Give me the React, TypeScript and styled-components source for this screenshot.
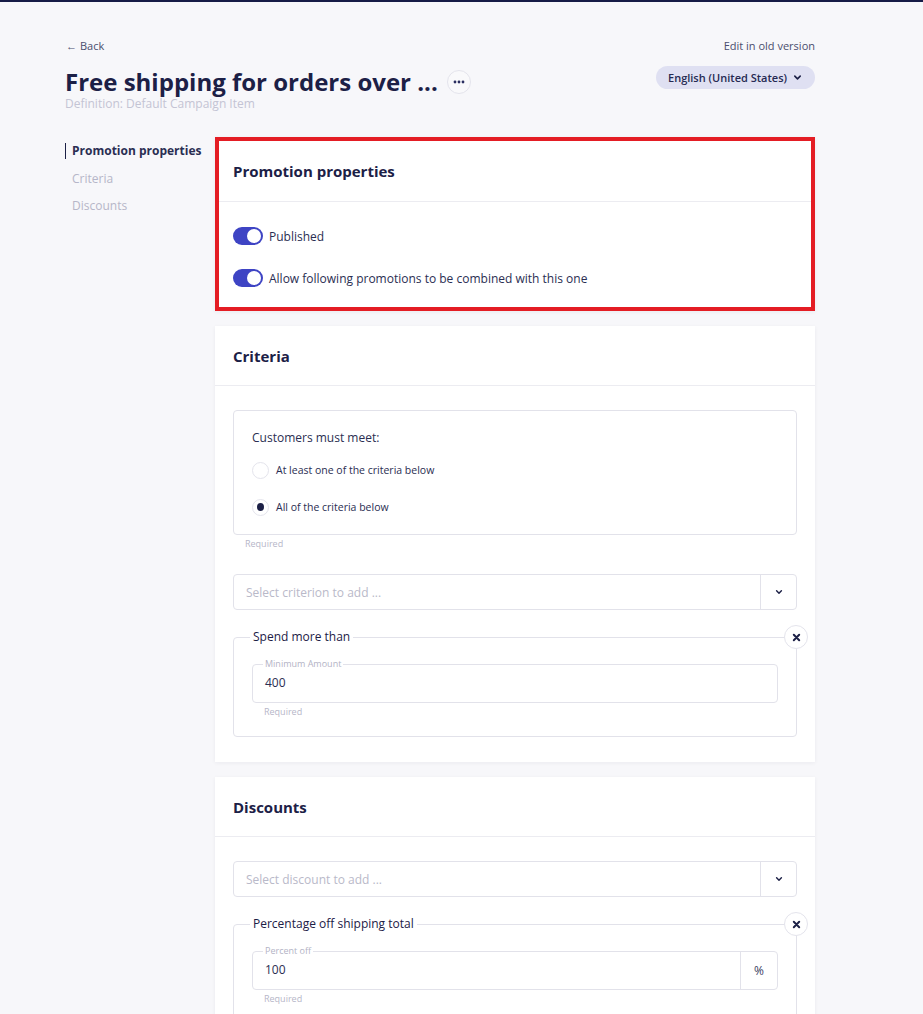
import React from 'react';
import styled, { createGlobalStyle } from 'styled-components';

const NAVY = '#1c2046';
const BORDER = '#e2e2ea';
const MUTED = '#b6b6c8';

const GlobalStyle = createGlobalStyle`
  html, body {
    margin: 0;
    padding: 0;
    background: #f7f7fa;
    font-family: 'Open Sans', 'Liberation Sans', sans-serif;
    color: ${NAVY};
  }
  * { box-sizing: border-box; }
`;

const TopLine = styled.div`
  height: 2px;
  background: #161b47;
`;

const Page = styled.div`
  width: 750px;
  margin-left: 65px;
  padding-top: 34px;
`;

const TopRow = styled.div`
  display: flex;
  justify-content: space-between;
  align-items: center;
  height: 18px;
  font-size: 11px;
  color: #4a4e6e;
`;

const BackLink = styled.a`
  display: flex;
  align-items: center;
  gap: 3px;
  color: #4a4e6e;
  text-decoration: none;
  margin-left: 1px;
`;

const TitleRow = styled.div`
  display: flex;
  justify-content: space-between;
  align-items: flex-start;
  margin-top: 14px;
`;

const TitleGroup = styled.div`
  display: flex;
  align-items: center;
  gap: 9px;
  height: 28px;
`;

const Title = styled.h1`
  margin: 0;
  font-size: 24px;
  line-height: 28px;
  font-weight: 700;
  color: ${NAVY};
`;

const DotsButton = styled.button`
  width: 24px;
  height: 24px;
  border-radius: 50%;
  border: 1px solid #e4e4ec;
  background: #f9f9fb;
  display: flex;
  align-items: center;
  justify-content: center;
  padding: 0;
`;

const LanguagePill = styled.button`
  display: flex;
  align-items: center;
  gap: 6px;
  height: 23px;
  margin-top: -2px;
  padding: 0 13px 0 12px;
  border: none;
  border-radius: 12px;
  background: #dfe0f2;
  font-family: inherit;
  font-size: 11px;
  font-weight: 600;
  color: #262a52;
`;

const Subtitle = styled.div`
  font-size: 12px;
  line-height: 16px;
  color: #c4c4d4;
`;

const Content = styled.div`
  display: flex;
  margin-top: 25px;
`;

const Nav = styled.nav`
  width: 150px;
  flex-shrink: 0;
  display: flex;
  flex-direction: column;
  gap: 11.5px;
  padding-top: 6px;
`;

const NavItem = styled.a<{ $active?: boolean }>`
  display: block;
  font-size: 12px;
  line-height: 16px;
  padding-left: 6px;
  border-left: 1px solid ${p => (p.$active ? NAVY : 'transparent')};
  font-weight: ${p => (p.$active ? 700 : 400)};
  color: ${p => (p.$active ? '#2a2e52' : MUTED)};
`;

const Cards = styled.div`
  width: 600px;
  display: flex;
  flex-direction: column;
  gap: 15px;
`;

const Card = styled.section<{ $highlight?: boolean }>`
  background: #fff;
  box-shadow: 0 1px 4px rgba(30, 32, 70, 0.06);
  outline: ${p => (p.$highlight ? '4px solid #e41d24' : 'none')};
  outline-offset: -4px;
`;

const CardHeader = styled.header<{ $tall?: boolean }>`
  height: ${p => (p.$tall ? '65px' : '60px')};
  padding: ${p => (p.$tall ? '4px 18px 0' : '0 18px')};
  display: flex;
  align-items: center;
  border-bottom: 1px solid #ececf1;
  font-size: 15px;
  font-weight: 700;
  color: ${NAVY};
`;

const CardBody = styled.div<{ $compact?: boolean }>`
  padding: ${p => (p.$compact ? '24px 18px 23px' : '24px 18px 25px')};
  display: flex;
  flex-direction: column;
  gap: ${p => (p.$compact ? '22px' : '0')};
`;

const ToggleRow = styled.label`
  display: flex;
  align-items: center;
  gap: 6px;
  height: 20px;
  font-size: 12px;
  color: #2a2e52;
`;

const Toggle = styled.span<{ $on: boolean }>`
  position: relative;
  width: 30px;
  height: 18px;
  border-radius: 9px;
  background: ${p => (p.$on ? '#3e44c4' : '#d4d4de')};
  &::after {
    content: '';
    position: absolute;
    top: 2px;
    left: ${p => (p.$on ? '14px' : '2px')};
    width: 14px;
    height: 14px;
    border-radius: 50%;
    background: #fff;
  }
`;

const OptionBox = styled.div`
  border: 1px solid ${BORDER};
  border-radius: 4px;
  padding: 18px 18px 17px;
`;

const OptionTitle = styled.div`
  font-size: 12px;
  line-height: 18px;
  color: #2a2e52;
  margin-bottom: 13px;
`;

const RadioList = styled.div`
  display: flex;
  flex-direction: column;
  gap: 17px;
`;

const RadioRow = styled.label`
  display: flex;
  align-items: center;
  gap: 7px;
  height: 20px;
  font-size: 10.5px;
  color: #2a2e52;
`;

const RadioCircle = styled.span<{ $checked: boolean }>`
  width: 17px;
  height: 17px;
  border-radius: 50%;
  border: 1px solid #e4e4ec;
  background: #fff;
  display: flex;
  align-items: center;
  justify-content: center;
  &::after {
    content: '';
    display: ${p => (p.$checked ? 'block' : 'none')};
    width: 7px;
    height: 8px;
    border-radius: 50%;
    background: #1c2046;
  }
`;

const Hint = styled.div<{ $indent?: number }>`
  font-size: 9px;
  line-height: 12px;
  color: ${MUTED};
  margin-top: 3px;
  padding-left: ${p => p.$indent ?? 12}px;
`;

const Select = styled.div<{ $top: number }>`
  display: flex;
  height: 36px;
  border: 1px solid ${BORDER};
  border-radius: 4px;
  margin-top: ${p => p.$top}px;
`;

const SelectText = styled.div`
  flex: 1;
  display: flex;
  align-items: center;
  padding-left: 12px;
  font-size: 12px;
  color: #b9b9c9;
`;

const SelectToggle = styled.div`
  width: 36px;
  border-left: 1px solid ${BORDER};
  display: flex;
  align-items: center;
  justify-content: center;
`;

const Group = styled.fieldset`
  position: relative;
  margin: 19px 0 0;
  padding: 13px 18px 18px;
  border: 1px solid ${BORDER};
  border-radius: 4px;
  min-width: 0;
`;

const GroupLegend = styled.legend`
  margin-left: -2px;
  padding: 0 3px;
  font-size: 12px;
  line-height: 16px;
  font-weight: 500;
  color: ${NAVY};
`;

const RemoveButton = styled.button`
  position: absolute;
  top: -20px;
  right: -12px;
  width: 24px;
  height: 24px;
  border-radius: 50%;
  border: 1px solid #e4e4ec;
  background: #fff;
  padding: 0;
  display: flex;
  align-items: center;
  justify-content: center;
`;

const Field = styled.fieldset`
  margin: 0;
  padding: 0;
  border: 1px solid ${BORDER};
  border-radius: 4px;
  display: flex;
  min-width: 0;
`;

const FieldLegend = styled.legend`
  margin-left: 10px;
  padding: 0 2px;
  font-size: 9px;
  line-height: 12px;
  color: #b3b3c5;
`;

const FieldValue = styled.div`
  flex: 1;
  padding: 4px 12px 10px;
  font-size: 12px;
  line-height: 18px;
  color: #2a2e52;
`;

const FieldSuffix = styled.div`
  width: 37px;
  margin-top: -6px;
  border-left: 1px solid ${BORDER};
  display: flex;
  align-items: center;
  justify-content: center;
  font-size: 12px;
  color: #3a3e62;
`;

const Chevron = ({ size = 8 }: { size?: number }) => (
  <svg width={size} height={size} viewBox="0 0 10 10" fill="none">
    <path d="M2 3.5 L5 6.5 L8 3.5" stroke={NAVY} strokeWidth="1.8" strokeLinecap="round" strokeLinejoin="round" />
  </svg>
);

const CloseIcon = () => (
  <svg width="9" height="9" viewBox="0 0 10 10" fill="none">
    <path d="M2 2 L8 8 M8 2 L2 8" stroke={NAVY} strokeWidth="2.2" strokeLinecap="round" />
  </svg>
);

const Dots = () => (
  <svg width="12" height="4" viewBox="0 0 12 4">
    <circle cx="2" cy="2" r="1.4" fill="#2a2e60" />
    <circle cx="6" cy="2" r="1.4" fill="#2a2e60" />
    <circle cx="10" cy="2" r="1.4" fill="#2a2e60" />
  </svg>
);

const App: React.FC = () => {
  return (
    <>
      <GlobalStyle />
      <TopLine />
      <Page>
        <TopRow>
          <BackLink href="#">
            <span>←</span>
            <span>Back</span>
          </BackLink>
          <span>Edit in old version</span>
        </TopRow>
        <TitleRow>
          <TitleGroup>
            <Title>Free shipping for orders over ...</Title>
            <DotsButton>
              <Dots />
            </DotsButton>
          </TitleGroup>
          <LanguagePill>
            English (United States)
            <Chevron size={9} />
          </LanguagePill>
        </TitleRow>
        <Subtitle>Definition: Default Campaign Item</Subtitle>

        <Content>
          <Nav>
            <NavItem $active>Promotion properties</NavItem>
            <NavItem>Criteria</NavItem>
            <NavItem>Discounts</NavItem>
          </Nav>

          <Cards>
            <Card $highlight>
              <CardHeader $tall>Promotion properties</CardHeader>
              <CardBody $compact>
                <ToggleRow>
                  <Toggle $on />
                  Published
                </ToggleRow>
                <ToggleRow>
                  <Toggle $on />
                  Allow following promotions to be combined with this one
                </ToggleRow>
              </CardBody>
            </Card>

            <Card>
              <CardHeader>Criteria</CardHeader>
              <CardBody>
                <OptionBox>
                  <OptionTitle>Customers must meet:</OptionTitle>
                  <RadioList>
                    <RadioRow>
                      <RadioCircle $checked={false} />
                      At least one of the criteria below
                    </RadioRow>
                    <RadioRow>
                      <RadioCircle $checked />
                      All of the criteria below
                    </RadioRow>
                  </RadioList>
                </OptionBox>
                <Hint>Required</Hint>
                <Select $top={24}>
                  <SelectText>Select criterion to add ...</SelectText>
                  <SelectToggle>
                    <Chevron />
                  </SelectToggle>
                </Select>
                <Group>
                  <GroupLegend>Spend more than</GroupLegend>
                  <RemoveButton>
                    <CloseIcon />
                  </RemoveButton>
                  <Field>
                    <FieldLegend>Minimum Amount</FieldLegend>
                    <FieldValue>400</FieldValue>
                  </Field>
                  <Hint>Required</Hint>
                </Group>
              </CardBody>
            </Card>

            <Card>
              <CardHeader>Discounts</CardHeader>
              <CardBody>
                <Select $top={0}>
                  <SelectText>Select discount to add ...</SelectText>
                  <SelectToggle>
                    <Chevron />
                  </SelectToggle>
                </Select>
                <Group>
                  <GroupLegend>Percentage off shipping total</GroupLegend>
                  <RemoveButton>
                    <CloseIcon />
                  </RemoveButton>
                  <Field>
                    <FieldLegend>Percent off</FieldLegend>
                    <FieldValue>100</FieldValue>
                    <FieldSuffix>%</FieldSuffix>
                  </Field>
                  <Hint>Required</Hint>
                </Group>
              </CardBody>
            </Card>
          </Cards>
        </Content>
      </Page>
    </>
  );
};

export default App;
